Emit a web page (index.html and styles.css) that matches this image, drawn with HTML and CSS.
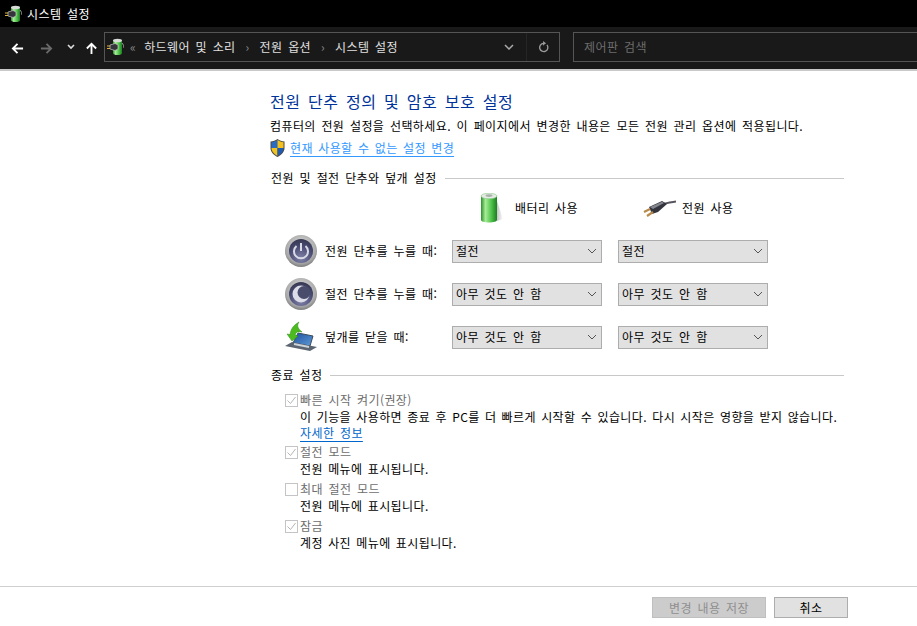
FILE: index.html
```html
<!DOCTYPE html>
<html lang="ko">
<head>
<meta charset="utf-8">
<title>시스템 설정</title>
<link rel="stylesheet" href="styles.css">
</head>
<body>
<svg class="defs" width="0" height="0" aria-hidden="true">
  <defs>
    <linearGradient id="bat" x1="0" x2="1" y1="0" y2="0">
      <stop offset="0" stop-color="#2f8f2e"/><stop offset=".28" stop-color="#a6ec97"/><stop offset=".65" stop-color="#4fc24a"/><stop offset="1" stop-color="#1c7d23"/>
    </linearGradient>
    <linearGradient id="shadow" x1="0" x2="1" y1="0" y2="0">
      <stop offset="0" stop-color="#c4c4c4"/><stop offset="1" stop-color="#ffffff"/>
    </linearGradient>
    <radialGradient id="ring" cx=".5" cy=".4" r=".6">
      <stop offset="0" stop-color="#e8e8e8"/><stop offset=".8" stop-color="#a8a8a8"/><stop offset="1" stop-color="#7d7d7d"/>
    </radialGradient>
    <radialGradient id="disc" cx=".5" cy=".8" r=".85">
      <stop offset="0" stop-color="#8082aa"/><stop offset=".6" stop-color="#484a70"/><stop offset="1" stop-color="#33354c"/>
    </radialGradient>
    <linearGradient id="screen" x1="0" x2="1" y1="0" y2="1">
      <stop offset="0" stop-color="#1d4f9e"/><stop offset="1" stop-color="#5f9bd8"/>
    </linearGradient>
    <symbol id="batt-small" viewBox="0 0 17 18">
      <path d="M6 2h9v13c0 1.500-2 2-4.500 2S6 16.500 6 15z" fill="url(#bat)"/>
      <ellipse cx="10.500" cy="2.500" rx="4.500" ry="1.800" fill="#d8dcd8"/>
      <path d="M0 8h3M0 10.500h3" stroke="#e6b422" stroke-width="1"/>
      <path d="M3 7l5-1.500 3 1.500v4l-3 1.500-5-1.500z" fill="#33353a" stroke="#c4c4c4" stroke-width=".7"/>
      <path d="M15 5a6.500 6.500 0 0 1 2 5" fill="none" stroke="#9a9a9a" stroke-width="1"/>
    </symbol>
  </defs>
</svg>

<header class="titlebar">
  <svg class="title-icon"><use href="#batt-small"/></svg>
  <span class="title-text">시스템 설정</span>
</header>

<nav class="toolbar">
  <svg class="nav-icon back" viewBox="0 0 14 14"><path d="M13 7H2M7 2 2 7l5 5" fill="none" stroke="#fff" stroke-width="2"/></svg>
  <svg class="nav-icon fwd" viewBox="0 0 14 14"><path d="M1 7h11M7 2l5 5-5 5" fill="none" stroke="#6a6a6a" stroke-width="2"/></svg>
  <svg class="nav-caret" viewBox="0 0 8 6"><path d="M1 1l3 3 3-3" fill="none" stroke="#ddd" stroke-width="1.600"/></svg>
  <svg class="nav-icon up" viewBox="0 0 14 14"><path d="M7 13V2M2 7l5-5 5 5" fill="none" stroke="#fff" stroke-width="2"/></svg>
  <div class="address">
    <svg class="addr-icon"><use href="#batt-small"/></svg>
    <span class="crumb-more">«</span>
    <span class="crumb">하드웨어 및 소리</span><span class="sep">›</span>
    <span class="crumb">전원 옵션</span><span class="sep">›</span>
    <span class="crumb">시스템 설정</span>
    <svg class="addr-caret" viewBox="0 0 10 6"><path d="M1 1l4 4 4-4" fill="none" stroke="#aaa" stroke-width="1.500"/></svg>
    <span class="refresh">
      <svg viewBox="0 0 12 13" width="11" height="12"><path d="M9.800 4.200A4.500 4.500 0 1 1 6 2.500H8" fill="none" stroke="#9a9a9a" stroke-width="1.500"/><path d="M5.500 0 8.500 2.500 5.500 5z" fill="#9a9a9a"/></svg>
    </span>
  </div>
  <div class="search">제어판 검색</div>
</nav>
<div class="divider-top"></div>

<main class="content">
  <h1 class="heading">전원 단추 정의 및 암호 보호 설정</h1>
  <p class="intro">컴퓨터의 전원 설정을 선택하세요. 이 페이지에서 변경한 내용은 모든 전원 관리 옵션에 적용됩니다.</p>
  <div class="shield-row">
    <svg class="shield" viewBox="1 0 14 18">
      <path d="M8 0C6 1.500 3.500 2.300 1 2.500V9c0 4 3 7 7 9 4-2 7-5 7-9V2.500C12.500 2.300 10 1.500 8 0z" fill="#4a4a4a"/>
      <path d="M8 1v8H2V3.200C4 3 6.200 2.300 8 1z" fill="#2a6cc4"/>
      <path d="M8 1c1.800 1.300 4 2 6 2.200V9H8z" fill="#f3c21e"/>
      <path d="M8 9H2c0 3.500 2.700 6 6 8z" fill="#f3c21e"/>
      <path d="M8 9v8c3.300-2 6-4.500 6-8z" fill="#1f5cb0"/>
    </svg>
    <a class="shield-link">현재 사용할 수 없는 설정 변경</a>
  </div>

  <div class="section section-power">
    <span class="section-title">전원 및 절전 단추와 덮개 설정</span><span class="section-line"></span>
  </div>

  <div class="power-head">
    <div class="head-cell head-battery">
      <svg class="battery" viewBox="0 0 24 30">
        <path d="M17 8l6 18-6 2z" fill="url(#shadow)"/>
        <path d="M1 3h16v24c0 1.500-3.500 2.500-8 2.500S1 28.500 1 27z" fill="url(#bat)"/>
        <ellipse cx="9" cy="3" rx="8" ry="2.800" fill="#e4ebe4" stroke="#8cc98a" stroke-width=".6"/>
        <ellipse cx="9" cy="2.600" rx="3.500" ry="1.400" fill="#a9b2a9"/>
      </svg>
      <span>배터리 사용</span>
    </div>
    <div class="head-cell head-plug">
      <svg class="plug" viewBox="0 0 33 17">
        <path d="M18 4.500C24 3 28 2 33 1.500" fill="none" stroke="#55555c" stroke-width="2.200"/>
        <path d="M6 7 19 1l5 3-9 8-6 2z" fill="#34353c"/>
        <path d="M7 7l12-5.200 2 1.200L10 9z" fill="#85878f"/>
        <path d="M7 9 1 12M10 12 4 16" stroke="#b88a4a" stroke-width="2.200"/>
      </svg>
      <span>전원 사용</span>
    </div>
  </div>

  <div class="power-row">
    <svg class="row-icon" viewBox="0 0 32 32">
      <circle cx="16" cy="16" r="16" fill="url(#ring)"/>
      <circle cx="16" cy="16" r="12" fill="url(#disc)"/>
      <path d="M11.500 11a7 7 0 1 0 9 0" fill="none" stroke="#d9dae6" stroke-width="2"/>
      <path d="M16 8v8" stroke="#d9dae6" stroke-width="2"/>
    </svg>
    <span class="row-label">전원 단추를 누를 때:</span>
    <div class="select">절전<svg class="chev" viewBox="0 0 10 6"><path d="M1 1l4 4 4-4" fill="none" stroke="#555"/></svg></div>
    <div class="select">절전<svg class="chev" viewBox="0 0 10 6"><path d="M1 1l4 4 4-4" fill="none" stroke="#555"/></svg></div>
  </div>
  <div class="power-row">
    <svg class="row-icon" viewBox="0 0 32 32">
      <circle cx="16" cy="16" r="16" fill="url(#ring)"/>
      <circle cx="16" cy="16" r="12" fill="url(#disc)"/>
      <circle cx="16" cy="16" r="8.500" fill="#dcdde8"/>
      <circle cx="19" cy="14.500" r="6.500" fill="#4a4c6c"/>
    </svg>
    <span class="row-label">절전 단추를 누를 때:</span>
    <div class="select">아무 것도 안 함<svg class="chev" viewBox="0 0 10 6"><path d="M1 1l4 4 4-4" fill="none" stroke="#555"/></svg></div>
    <div class="select">아무 것도 안 함<svg class="chev" viewBox="0 0 10 6"><path d="M1 1l4 4 4-4" fill="none" stroke="#555"/></svg></div>
  </div>
  <div class="power-row">
    <svg class="row-icon" viewBox="0 0 32 30">
      <path d="M8 21 13 11l15 3-3 10z" fill="url(#screen)" stroke="#3c4a5e"/>
      <path d="M0 24l7-4 25 5-7 4z" fill="#5b6470"/>
      <path d="M9 22l15 3" stroke="#cdd3da" stroke-width="2"/>
      <path d="M17 10c-4-1-6 0-7 3l3 1-6 5-5-7 3 .5C6 6 9 3 14 0c-2 3-2 6 3 10z" fill="#4cbb1f" stroke="#2d8a12" stroke-width=".5"/>
    </svg>
    <span class="row-label">덮개를 닫을 때:</span>
    <div class="select">아무 것도 안 함<svg class="chev" viewBox="0 0 10 6"><path d="M1 1l4 4 4-4" fill="none" stroke="#555"/></svg></div>
    <div class="select">아무 것도 안 함<svg class="chev" viewBox="0 0 10 6"><path d="M1 1l4 4 4-4" fill="none" stroke="#555"/></svg></div>
  </div>

  <div class="section section-shutdown">
    <span class="section-title">종료 설정</span><span class="section-line"></span>
  </div>

  <div class="option option-fast">
    <div class="check-line">
      <svg class="check" viewBox="0 0 13 13"><rect x=".5" y=".5" width="12" height="12" fill="#fff" stroke="#c4c4c4"/><path d="M2.500 6.500 5.500 9.500 10.500 3" fill="none" stroke="#b5b5b5"/></svg>
      <span class="check-label">빠른 시작 켜기(권장)</span>
    </div>
    <p class="option-desc">이 기능을 사용하면 종료 후 PC를 더 빠르게 시작할 수 있습니다. 다시 시작은 영향을 받지 않습니다.</p>
    <a class="more-link">자세한 정보</a>
  </div>
  <div class="option">
    <div class="check-line">
      <svg class="check" viewBox="0 0 13 13"><rect x=".5" y=".5" width="12" height="12" fill="#fff" stroke="#c4c4c4"/><path d="M2.500 6.500 5.500 9.500 10.500 3" fill="none" stroke="#b5b5b5"/></svg>
      <span class="check-label">절전 모드</span>
    </div>
    <p class="option-desc">전원 메뉴에 표시됩니다.</p>
  </div>
  <div class="option">
    <div class="check-line">
      <svg class="check" viewBox="0 0 13 13"><rect x=".5" y=".5" width="12" height="12" fill="#fff" stroke="#c4c4c4"/></svg>
      <span class="check-label">최대 절전 모드</span>
    </div>
    <p class="option-desc">전원 메뉴에 표시됩니다.</p>
  </div>
  <div class="option">
    <div class="check-line">
      <svg class="check" viewBox="0 0 13 13"><rect x=".5" y=".5" width="12" height="12" fill="#fff" stroke="#c4c4c4"/><path d="M2.500 6.500 5.500 9.500 10.500 3" fill="none" stroke="#b5b5b5"/></svg>
      <span class="check-label">잠금</span>
    </div>
    <p class="option-desc">계정 사진 메뉴에 표시됩니다.</p>
  </div>
</main>

<footer class="footer">
  <button class="btn btn-disabled">변경 내용 저장</button>
  <button class="btn btn-cancel">취소</button>
</footer>
</body>
</html>
```
FILE: styles.css
```css
* { box-sizing: border-box; }
html, body { margin: 0; padding: 0; }
body {
  width: 917px;
  height: 626px;
  overflow: hidden;
  background: #fff;
  color: #000;
  font-family: "Noto Sans CJK KR", "Noto Sans", sans-serif;
  font-size: 12px;
  line-height: 16px;
  letter-spacing: .4px;
  word-spacing: 1.9px;
  display: flex;
  flex-direction: column;
}
.defs { position: absolute; }

.titlebar {
  height: 27px;
  background: #000;
  color: #fff;
  display: flex;
  align-items: center;
  padding-left: 5px;
  flex: none;
}
.title-icon { width: 17px; height: 18px; margin-right: 5px; }

.toolbar {
  height: 42px;
  background: #191919;
  display: flex;
  align-items: flex-start;
  padding-top: 5px;
  flex: none;
}
.nav-icon { width: 13px; height: 13px; margin-top: 10px; flex: none; }
.back { margin-left: 11px; }
.fwd { margin-left: 16px; }
.nav-caret { width: 8px; height: 6px; margin: 12px 0 0 14px; flex: none; }
.up { margin-left: 10px; margin-right: 6px; }

.address {
  width: 456px;
  height: 30px;
  border: 1px solid #555;
  display: flex;
  align-items: center;
  color: #e0e0e0;
  padding-left: 2px;
  flex: none;
}
.addr-icon { width: 17px; height: 18px; flex: none; }
.crumb-more { color: #8a8a8a; margin: 0 8px 0 6px; }
.sep { color: #8a8a8a; margin: 0 10px; }
.addr-caret { width: 10px; height: 6px; margin-left: auto; margin-right: 12px; }
.refresh {
  width: 33px;
  height: 28px;
  border-left: 1px solid #262626;
  display: flex;
  align-items: center;
  justify-content: center;
}
.search {
  width: 345px;
  height: 30px;
  margin-left: 13px;
  border: 1px solid #555;
  border-right: 0;
  color: #6d6d6d;
  padding: 6px 10px;
  flex: none;
}

.divider-top { height: 2px; background: #c9c9c9; flex: none; }

.content { padding-left: 270px; flex: 1; min-height: 0; }
.heading {
  margin: 20px 0 0;
  font-size: 16px;
  line-height: 20px;
  font-weight: 400;
  color: #003399;
  letter-spacing: .6px;
  word-spacing: 2.3px;
}
.intro { margin: 7px 0 0; }
.shield-row { display: flex; align-items: center; height: 18px; margin-top: 5px; }
.shield { width: 15px; height: 18px; margin-right: 5px; flex: none; }
.shield-link { color: #3399ff; text-decoration: underline; text-underline-offset: 3px; word-spacing: 1.6px; }

.section { display: flex; align-items: center; height: 16px; margin-left: 1px; width: 573px; }
.section-power { margin-top: 13px; }
.section-shutdown { margin-top: 14px; }
.section-title { margin-right: 8px; }
.section-line { flex: 1; height: 1px; background: #c8c8c8; }

.power-head { display: flex; height: 32px; margin: 6px 0 0 210px; }
.head-cell { display: flex; align-items: center; }
.head-battery { width: 163px; gap: 11px; }
.head-plug { gap: 6px; }
.battery { width: 24px; height: 30px; }
.plug { width: 33px; height: 17px; }

.power-row { display: flex; align-items: center; height: 32px; margin-left: 15px; margin-top: 11px; }
.row-icon { width: 32px; height: 32px; flex: none; }
.row-label { width: 135px; padding-left: 8px; }
.select {
  width: 150px;
  height: 23px;
  margin-right: 16px;
  background: #e1e1e1;
  border: 1px solid #adadad;
  display: flex;
  align-items: center;
  justify-content: space-between;
  padding: 0 4px 1px 3px;
  flex: none;
}
.chev { width: 10px; height: 6px; }

.option { margin-left: 15px; padding-top: 4px; }
.option-fast { padding-top: 9px; }
.option-fast + .option { padding-top: 3px; }
.check-line { display: flex; align-items: center; height: 16px; }
.check { width: 13px; height: 13px; margin-right: 2px; flex: none; }
.check-label { color: #6d6d6d; }
.option-desc { margin: 1px 0 0 15px; height: 16px; white-space: nowrap; word-spacing: 1.5px; }
.more-link { display: block; width: fit-content; margin-left: 15px; color: #0066cc; text-decoration: underline; text-underline-offset: 3px; }

.footer {
  height: 40px;
  border-top: 1px solid #cfcfcf;
  display: flex;
  justify-content: flex-end;
  gap: 8px;
  padding: 10px 69px 0 0;
  flex: none;
}
.btn {
  height: 21px;
  font: inherit;
  padding: 0;
  letter-spacing: inherit;
  word-spacing: inherit;
}
.btn-disabled { width: 114px; background: #cccccc; border: 1px solid #bfbfbf; color: #8f8f8f; }
.btn-cancel { width: 74px; background: #e1e1e1; border: 1px solid #adadad; color: #000; }
```
